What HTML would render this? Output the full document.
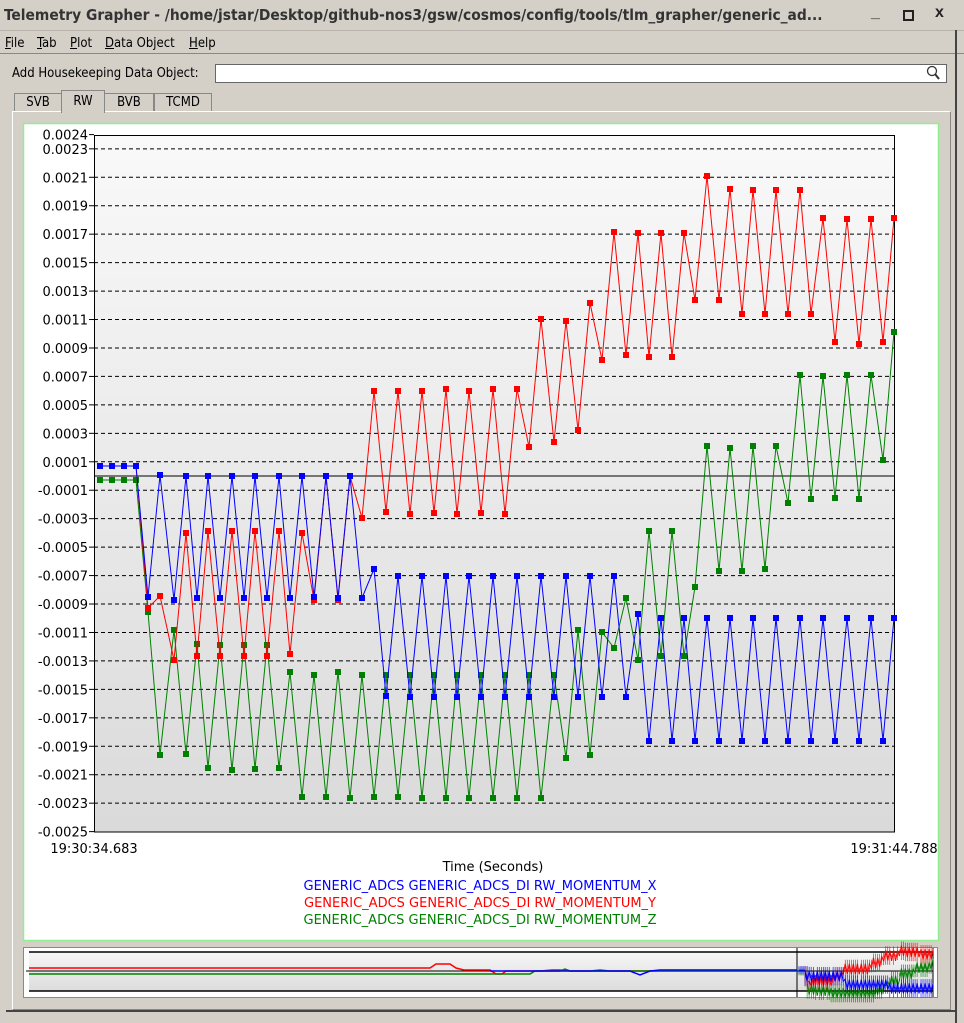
<!DOCTYPE html>
<html><head><meta charset="utf-8"><style>
html,body{margin:0;padding:0;width:964px;height:1023px;overflow:hidden;background:#d4d0c8;font-family:"DejaVu Sans","Liberation Sans",sans-serif;}
.abs{position:absolute}
.m{position:absolute;top:36px;font:13px 'DejaVu Sans Condensed','DejaVu Sans',sans-serif;color:#000;white-space:nowrap}
</style></head><body>
<div class="abs" style="left:0;top:0;width:964px;height:30px;background:#d4d0c8;border-bottom:1px solid #b8b4ac"></div>
<div class="abs" style="left:4px;top:6px;font:bold 15px 'DejaVu Sans Condensed','DejaVu Sans',sans-serif;color:#333;white-space:nowrap;transform:scaleX(1.025);transform-origin:left">Telemetry Grapher - /home/jstar/Desktop/github-nos3/gsw/cosmos/config/tools/tlm_grapher/generic_ad...</div>
<div class="abs" style="left:871px;top:4px;font:bold 16px sans-serif;color:#222">_</div>
<div class="abs" style="left:903px;top:10px;width:7px;height:7px;border:2px solid #222"></div>
<div class="abs" style="left:935px;top:4px;font:bold 16px sans-serif;color:#222">x</div>
<div class="m" style="left:5px"><u>F</u>ile</div>
<div class="m" style="left:37px"><u>T</u>ab</div>
<div class="m" style="left:70px"><u>P</u>lot</div>
<div class="m" style="left:105px"><u>D</u>ata Object</div>
<div class="m" style="left:189px"><u>H</u>elp</div>
<div class="abs" style="left:0;top:53px;width:964px;height:1px;background:#888"></div>
<div class="abs" style="left:12px;top:66px;font:13px 'DejaVu Sans Condensed','DejaVu Sans',sans-serif;color:#000">Add Housekeeping Data Object:</div>
<div class="abs" style="left:215px;top:64px;width:730px;height:17px;background:#fff;border:1px solid #666"></div>
<svg class="abs" style="left:925px;top:65px" width="18" height="16"><circle cx="7" cy="6" r="4.5" fill="none" stroke="#333" stroke-width="1.3"/><line x1="10" y1="9" x2="14" y2="14" stroke="#333" stroke-width="2"/></svg>
<div class="abs" style="left:14px;top:93px;width:46px;height:18px;border:1px solid #888;border-bottom:none;background:#d4d0c8;font:13px 'DejaVu Sans Condensed',sans-serif;text-align:center;line-height:18px">SVB</div>
<div class="abs" style="left:61px;top:90px;width:42px;height:22px;border:1px solid #888;border-bottom:none;background:#d4d0c8;font:13px 'DejaVu Sans Condensed',sans-serif;text-align:center;line-height:22px;z-index:2">RW</div>
<div class="abs" style="left:104px;top:93px;width:48px;height:18px;border:1px solid #888;border-bottom:none;background:#d4d0c8;font:13px 'DejaVu Sans Condensed',sans-serif;text-align:center;line-height:18px">BVB</div>
<div class="abs" style="left:154px;top:93px;width:56px;height:18px;border:1px solid #888;border-bottom:none;background:#d4d0c8;font:13px 'DejaVu Sans Condensed',sans-serif;text-align:center;line-height:18px">TCMD</div>
<div class="abs" style="left:12px;top:111px;width:937px;height:897px;border:1px solid #888;border-top-color:#fff;border-left-color:#fff;"></div>
<div class="abs" style="left:955px;top:30px;width:2px;height:993px;background:#444"></div>
<div class="abs" style="left:6px;top:1010px;width:951px;height:2px;background:#444"></div>
<svg class="abs" style="left:0;top:0" width="964" height="1023" id="s">
<defs>
<linearGradient id="g" x1="0" y1="0" x2="0" y2="1"><stop offset="0" stop-color="#f9f9f9"/><stop offset="1" stop-color="#dadada"/></linearGradient>
<linearGradient id="g2" x1="0" y1="0" x2="0" y2="1"><stop offset="0" stop-color="#f6f6f6"/><stop offset="1" stop-color="#dcdcdc"/></linearGradient>
</defs>
<rect x="23.5" y="123.5" width="915" height="817" fill="#fff" stroke="#90ee90" stroke-width="1.5"/>
<rect x="94" y="135" width="800" height="697" fill="url(#g)"/>
<g id="grid"></g>
<line x1="94" y1="476" x2="894" y2="476" stroke="#000"/>
<rect x="94.5" y="135.5" width="800" height="696.5" fill="none" stroke="#000"/>
<g id="data"></g>
<g font-family="DejaVu Sans,sans-serif" font-size="13" fill="#000">
<text x="94" y="853" text-anchor="middle">19:30:34.683</text>
<text x="894" y="853" text-anchor="middle">19:31:44.788</text>
<text x="493" y="871" text-anchor="middle">Time (Seconds)</text>
<text x="480" y="890" text-anchor="middle" fill="#0000ff">GENERIC_ADCS GENERIC_ADCS_DI RW_MOMENTUM_X</text>
<text x="480" y="907" text-anchor="middle" fill="#ff0000">GENERIC_ADCS GENERIC_ADCS_DI RW_MOMENTUM_Y</text>
<text x="480" y="924" text-anchor="middle" fill="#008000">GENERIC_ADCS GENERIC_ADCS_DI RW_MOMENTUM_Z</text>
</g>
<rect x="23.5" y="947.5" width="914" height="50" fill="#fff" stroke="#888"/>
<rect x="29" y="952" width="904" height="39" fill="url(#g2)"/>
<line x1="29" y1="952" x2="933" y2="952" stroke="#000" stroke-width="1.5"/>
<line x1="29" y1="991" x2="933" y2="991" stroke="#000" stroke-width="1.5"/>
<line x1="26" y1="971" x2="933" y2="971" stroke="#000"/>
<line x1="797" y1="948" x2="797" y2="997" stroke="#000"/>
<line x1="933" y1="948" x2="933" y2="997" stroke="#000"/>
<polyline fill="none" stroke="#ff0000" stroke-width="1.5" points="29,968 430,968 436,964 450,964 456,968 464,970 490,970 496,974 502,974 506,971 540,971 552,970 560,970 570,971 797,971"/>
<polyline fill="none" stroke="#008000" stroke-width="1.5" points="29,974 530,974 535,971 560,971 565,969 570,971 590,971 600,970 610,971 797,971"/>
<polyline fill="none" stroke="#0000ff" stroke-width="1.5" points="490,971 500,971 630,971 640,975 650,971 660,970 797,970"/>
<g id="ov"></g>
</svg>
<script>
var NS="http://www.w3.org/2000/svg";
function el(p,n,a){var e=document.createElementNS(NS,n);for(var k in a)e.setAttribute(k,a[k]);p.appendChild(e);return e;}
var grid=document.getElementById('grid');
function Y(v){return 476-v*142245;}
var labs=["0.0024"];
for(var i=23;i>=-25;i-=2){labs.push((i<0?"-":"")+"0."+("000"+Math.abs(i)).slice(-4));}
labs.forEach(function(l){var v=parseFloat(l),y=Y(v);
 if(l!="0.0024"&&l!="-0.0025")el(grid,'line',{x1:94,x2:894,y1:y,y2:y,stroke:'#000','stroke-dasharray':'4,3','stroke-width':1});
 el(grid,'line',{x1:89,x2:94,y1:y,y2:y,stroke:'#000'});
 var t=el(grid,'text',{x:88,y:y+5,'text-anchor':'end','font-family':'DejaVu Sans,sans-serif','font-size':13});t.textContent=l;});
var B="100,466 112,466 124,466 136,466 148,597 160,475 174,600 186,476 197,598 208,476 220,598 232,476 244,598 255,476 267,598 279,476 290,598 302,476 314,597 326,476 338,598 350,476 362,598 374,569 386,696 398,576 410,697 422,576 434,697 446,576 457,697 469,576 481,697 493,576 505,697 517,576 529,697 541,576 554,697 566,576 578,697 590,576 602,697 614,576 626,697 638,614 649,741 661,618 672,741 684,618 695,741 707,618 719,741 730,618 742,741 753,618 765,741 776,618 788,741 800,618 811,741 823,618 835,741 847,618 859,741 871,618 883,741 894,618";
var R="136,466 148,608 160,596 174,660 186,533 197,656 208,531 220,656 232,531 244,656 255,531 267,656 279,531 290,654 302,533 314,600 326,476 338,600 350,476 362,518 374,391 386,512 398,391 410,514 422,391 434,513 446,389 457,514 469,391 481,513 493,389 505,514 517,389 529,447 541,319 554,442 566,321 578,430 590,303 602,360 614,232 626,355 638,233 649,357 661,233 672,357 684,233 695,300 707,176 719,300 730,189 742,314 753,190 765,314 776,190 788,314 800,190 811,314 823,218 835,342 847,219 859,344 871,219 883,342 894,218";
var G="100,480 112,480 124,480 136,480 148,612 160,755 174,630 186,754 197,644 208,768 220,645 232,770 244,645 255,769 267,645 279,768 290,672 302,797 314,675 326,797 338,672 350,798 362,675 374,797 386,675 398,797 410,675 422,798 434,675 446,798 457,675 469,798 481,675 493,798 505,675 517,798 529,675 541,798 554,675 566,758 578,630 590,755 602,632 614,648 626,598 638,660 649,531 661,656 672,531 684,656 695,587 707,446 719,571 730,448 742,571 753,446 765,569 776,446 788,503 800,375 811,499 823,376 835,498 847,375 859,499 871,375 883,460 894,332";
var D=document.getElementById('data');
[[G,'#008000'],[R,'#ff0000'],[B,'#0000ff']].forEach(function(s){
 el(D,'polyline',{points:s[0],fill:'none',stroke:s[1],'stroke-width':1});
 s[0].split(' ').forEach(function(p){var q=p.split(',');el(D,'rect',{x:+q[0]-3,y:+q[1]-3,width:6,height:6,fill:s[1]});});
});
var O=document.getElementById('ov');
function ovs(pts,c){var a=pts.split(' ').map(function(p){var q=p.split(',');return [798+(q[0]-94)*135/800,971+(q[1]-476)*0.085];});
 el(O,'polyline',{points:a.map(function(p){return p[0]+','+p[1];}).join(' '),fill:'none',stroke:c,'stroke-width':1});
 for(var i=1;i<a.length;i++){var x0=a[i-1][0],x1=a[i][0];for(var x=x0;x<x1;x+=2){el(O,'line',{x1:x,x2:x,y1:a[i-1][1]-4,y2:a[i][1]+4,stroke:c,'stroke-width':0.6});}}}
ovs(G,'#008000');ovs(R,'#ff0000');ovs(B,'#0000ff');
</script>
</body></html>
